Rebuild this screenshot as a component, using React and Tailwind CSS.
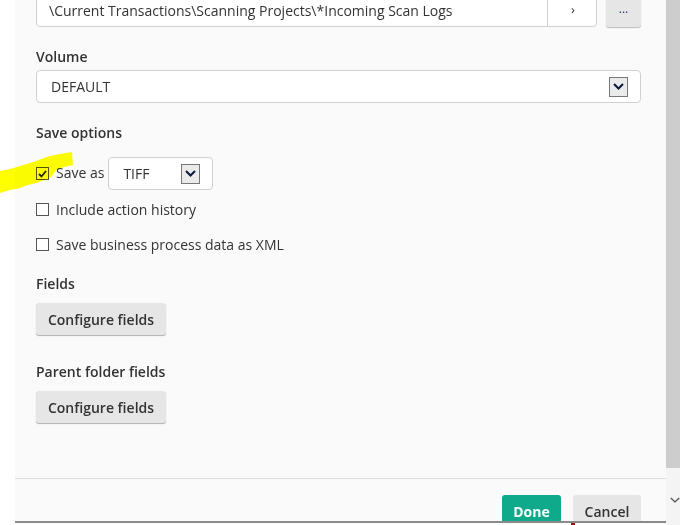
import { useState } from "react";

const font = { fontFamily: '"Open Sans", "Liberation Sans", sans-serif' };

export default function App() {
  const [saveAs, setSaveAs] = useState(true);
  const [history, setHistory] = useState(false);
  const [xml, setXml] = useState(false);

  return (
    <div
      className="relative flex h-[525px] w-[680px] overflow-hidden bg-white text-[14px] text-[#333]"
      style={font}
    >
      <div className="w-[15px] shrink-0 bg-white" />

      <div className="flex w-[651px] shrink-0 flex-col bg-[#fafafa]">
        <div className="h-[479px] shrink-0 overflow-hidden border-b border-[#dcdcdc] pl-[21px] pr-[25px]">
          <div className="mt-[-7px] flex h-[34px] gap-[9px]">
            <div className="flex flex-1 rounded-[4px] border border-[#d0d0d0] bg-white">
              <div className="flex flex-1 items-center pl-[12px]">
                \Current Transactions\Scanning Projects\*Incoming Scan Logs
              </div>
              <div className="flex w-[49px] items-center justify-center border-l border-[#d0d0d0] pl-[2px] text-[13px]">
                ›
              </div>
            </div>
            <button className="w-[35px] rounded-[3px] bg-[#e6e6e6] pb-[2px] text-[12px] text-[#2a3a6a] shadow-[0_1px_1px_rgba(0,0,0,0.25)]">
              ...
            </button>
          </div>

          <Label className="mt-[20px] mb-[3px]">Volume</Label>
          <Select value="DEFAULT" className="h-[33px] w-full" />

          <Label className="mt-[20px]">Save options</Label>

          <div className="mt-[14px] flex h-[33px] items-center">
            <Check checked={saveAs} onChange={setSaveAs} />
            <span className="ml-[7px] mr-[4px] pb-[2px]">Save as</span>
            <Select value="TIFF" className="h-[33px] w-[105px]" />
          </div>
          <div className="mt-[9px] flex h-[20px] items-center">
            <Check checked={history} onChange={setHistory} />
            <span className="ml-[7px]">Include action history</span>
          </div>
          <div className="mt-[15px] flex h-[20px] items-center">
            <Check checked={xml} onChange={setXml} />
            <span className="ml-[7px]">Save business process data as XML</span>
          </div>

          <Label className="mt-[20px] mb-[9px]">Fields</Label>
          <GrayButton>Configure fields</GrayButton>

          <Label className="mt-[27px] mb-[9px]">Parent folder fields</Label>
          <GrayButton>Configure fields</GrayButton>
        </div>

        <div className="flex h-[42px] shrink-0 justify-end gap-[12px] overflow-hidden pr-[25px] pt-[16px]">
          <button className="h-[32px] w-[59px] rounded-[3px] bg-[#0fa98b] font-bold text-white">
            Done
          </button>
          <button className="h-[32px] w-[68px] rounded-[3px] bg-[#e6e6e6] font-semibold text-[#333]">
            Cancel
          </button>
        </div>
        <div className="h-[2px] shrink-0 bg-[#8a8a8a]" />
        <div className="flex flex-1 bg-white pl-[556px]">
          <span className="h-[2px] w-[4px] bg-[#a01010]" />
        </div>
      </div>

      <div className="flex w-[14px] shrink-0 flex-col bg-[#f4f4f4]">
        <div className="h-[468px] bg-[#cdcdcd]" />
        <div className="mt-[28px] flex justify-center pl-[4px]">
          <svg width="13" height="8" viewBox="0 0 13 8">
            <path d="M1 1.5 6.5 6.5 12 1.5" fill="none" stroke="#555" strokeWidth="1.8" />
          </svg>
        </div>
      </div>

      <svg
        className="pointer-events-none absolute left-0 top-[150px] mix-blend-multiply"
        width="76"
        height="44"
        viewBox="0 0 76 44"
      >
        <polygon
          points="0,21 10,19 20,16 30,13 36,11 44,8 50,6 60,4 72,2 73,15 64,17 56,20 52,26 48,29 36,33 28,35 20,38 10,40 0,43"
          fill="#ffff00"
        />
      </svg>
    </div>
  );
}

function Label({ children, className = "" }) {
  return <div className={`h-[20px] font-semibold leading-[20px] ${className}`}>{children}</div>;
}

function Select({ value, className = "" }) {
  return (
    <div
      className={`flex items-center justify-between rounded-[4px] border border-[#d0d0d0] bg-white pl-[14px] pr-[12px] ${className}`}
    >
      <span>{value}</span>
      <span className="flex h-[20px] w-[19px] items-center justify-center border border-[#777] bg-[#ebebeb]">
        <svg width="11" height="7" viewBox="0 0 11 7">
          <path d="M1 1 5.5 5.5 10 1" fill="none" stroke="#0b1a3a" strokeWidth="2" />
        </svg>
      </span>
    </div>
  );
}

function Check({ checked, onChange }) {
  return (
    <button
      onClick={() => onChange(!checked)}
      className="flex h-[13px] w-[13px] shrink-0 items-center justify-center border border-[#555] bg-white"
    >
      {checked && (
        <svg width="9" height="8" viewBox="0 0 9 8">
          <path d="M1 4 3.5 6.5 8 1" fill="none" stroke="#222" strokeWidth="1.8" />
        </svg>
      )}
    </button>
  );
}

function GrayButton({ children }) {
  return (
    <button className="h-[32px] w-[130px] rounded-[3px] bg-[#e6e6e6] font-semibold text-[#333] shadow-[0_1px_1px_rgba(0,0,0,0.3)]">
      {children}
    </button>
  );
}
